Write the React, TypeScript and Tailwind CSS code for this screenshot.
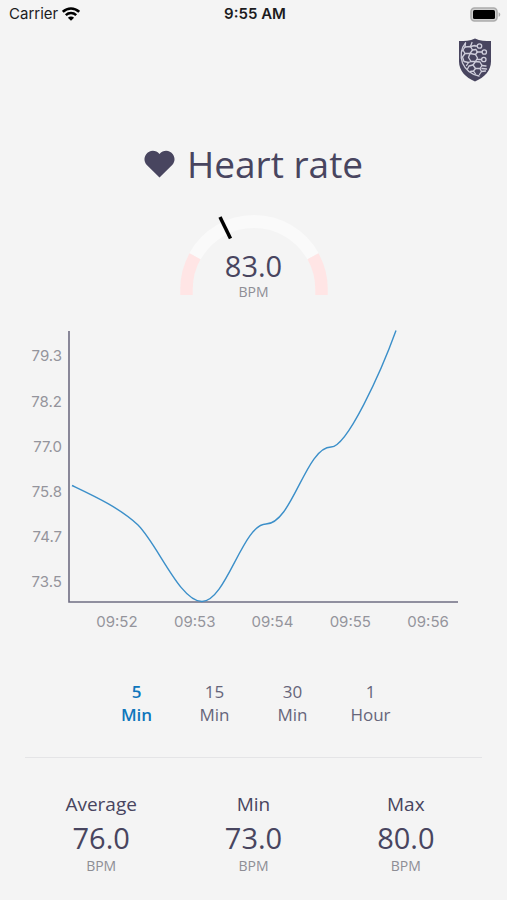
import { useState } from "react";

const levels = ["79.3", "78.2", "77.0", "75.8", "74.7", "73.5"];
const times = ["09:52", "09:53", "09:54", "09:55", "09:56"];
const ranges = [
  { amount: "5", unit: "Min" },
  { amount: "15", unit: "Min" },
  { amount: "30", unit: "Min" },
  { amount: "1", unit: "Hour" },
];
const stats = [
  { label: "Average", value: "76.0" },
  { label: "Min", value: "73.0" },
  { label: "Max", value: "80.0" },
];

function WifiIcon() {
  return (
    <svg className="h-[14px] w-[18px]" viewBox="0 0 18 14" fill="none" aria-hidden="true">
      <path d="M.8 4.900C5.600.3 12.400.3 17.200 4.900" stroke="#000" strokeWidth="2.600" />
      <path d="M3.800 8.200c3-2.800 7.400-2.800 10.400 0" stroke="#000" strokeWidth="2.500" />
      <path d="M9 13.800 5.900 10.800c1.800-1.600 4.400-1.600 6.200 0Z" fill="#000" />
    </svg>
  );
}

function BatteryIcon() {
  return (
    <svg className="h-[15px] w-[31px]" viewBox="0 0 31 15" aria-hidden="true">
      <rect x="1" y="1" width="26" height="13" rx="3.500" fill="#d0d0d0" stroke="#acacac" strokeWidth="1.600" />
      <rect x="3" y="3" width="22" height="9" rx="1.500" fill="#000" />
      <path d="M28.600 5.200c2.200.8 2.200 3.800 0 4.600Z" fill="#acacac" />
    </svg>
  );
}

function ShieldLogo() {
  return (
    <svg className="h-[44px] w-[34px]" viewBox="0 0 34 44" fill="none" aria-hidden="true">
      <path d="M17 .5c5 2.400 10.500 2.500 16 2.500v20.500c0 9-6.500 16-16 20C7.500 39.500 1 32.500 1 23.500V3C6.500 3 12 2.900 17 .5Z" fill="#48455f" />
      <g stroke="#cfcedb" strokeWidth="1.300" strokeLinejoin="round" strokeLinecap="round">
        <path d="M7.500 5C3 10 2 18 4.500 25c3 7 9 11.500 16.500 13" />
        <path d="M7.500 5 7 9M14 4.500l-1.500 4" />
        <path d="M7 9 12.500 8.500 14.500 12 12 15.500 7 15.500 5 12Z" />
        <path d="M12.500 8.500 17 7.500M14.500 12l3.500-.500 1.500 2.500-2 2.500" />
        <path d="M12 15.500 17.500 16.500 19.500 20 17.500 23.500 13 23.500 10.500 19.500Z" />
        <path d="M7 15.500 4.500 19 6 23.500 10.500 24.500 13 23.500M5 12 3.500 13.500" />
        <path d="m10.500 24.500-2 3M17.500 23.500l4.500.5 2 3.500-2 3h-4.500L15 27l2.500-3.500" />
        <path d="m15 27-4 1-1.500 3M17.500 30.500 15.500 33l2 3M15.500 33l-3 .5M22 30.500l1.500 3-2 3M24 27.500l4 .5M23.500 33.500l4-.5M24 30.500l4.500.5" />
        <path d="M17 8h2.500M18.500 14H24M19.500 21.500h4" />
        <circle cx="21.500" cy="8" r="2.200" />
        <circle cx="26.300" cy="14" r="2.200" />
        <circle cx="25.800" cy="21.500" r="2.200" />
      </g>
    </svg>
  );
}

function HeartIcon() {
  return (
    <svg className="h-[28px] w-[31px]" viewBox="0 0 32 29" aria-hidden="true">
      <path
        d="M16 28.500 2.600 15.200C-.2 12.300-.2 7.600 2.200 4.400 5.200.1 12-.7 16 4.200c4-4.900 10.800-4.100 13.800.2 2.400 3.200 2.400 7.900-.4 10.800Z"
        fill="#48455f"
      />
    </svg>
  );
}

function Gauge() {
  return (
    <div className="mx-auto mt-[26px] grid w-[150px]">
      <svg className="col-start-1 row-start-1 h-[80px] w-full" viewBox="0 0 150 80" fill="none" aria-hidden="true">
        <path d="M16 41.300A67.500 67.500 0 0 1 134 41.300" stroke="#fafafa" strokeWidth="13" />
        <path d="M7.500 80V74A67.500 67.500 0 0 1 16 41.300" stroke="#ffe5e5" strokeWidth="12.500" />
        <path d="M142.500 80V74A67.500 67.500 0 0 0 134 41.300" stroke="#ffe5e5" strokeWidth="12.500" />
        <path d="m41 2 10.500 21.500" stroke="#000" strokeWidth="3.500" />
      </svg>
      <div className="col-start-1 row-start-1 flex flex-col items-center pt-[33px]">
        <span className="text-[29px] leading-[36px]">83.0</span>
        <span className="text-[14px] leading-[16px] text-[#8e8e95]">BPM</span>
      </div>
    </div>
  );
}

function Chart() {
  return (
    <section aria-label="Heart rate over time" className="mt-[30px]">
      <div className="flex pr-[48px]">
        <div className="mt-[4px] flex h-[271px] w-[68px] flex-col pr-[6px] text-right font-[Inter,sans-serif] text-[15px] text-[#94949c]">
          {levels.map((level) => (
            <span key={level} className="flex flex-1 items-center justify-end">
              {level}
            </span>
          ))}
        </div>
        <svg className="h-[273px] min-w-0 flex-1 overflow-visible" viewBox="0 0 391 273" preserveAspectRatio="none" fill="none">
          <path d="M1 1V272H390" stroke="#6f6d82" strokeWidth="1.600" vectorEffect="non-scaling-stroke" />
          <path
            d="M4 155.500C26 166 52 178 70 195C90 215 112 271.500 134 271.500C158 271.500 175 194 198 194C224 194 238 117 263 117C279 117 313 42 328 .5"
            stroke="#3b8fc9"
            strokeWidth="1.400"
            vectorEffect="non-scaling-stroke"
          />
        </svg>
      </div>
      <div className="mr-[40px] ml-[78px] mt-[7px] grid grid-cols-5 text-center font-[Inter,sans-serif] text-[15px] leading-[20px] text-[#94949c]">
        {times.map((time) => (
          <span key={time}>{time}</span>
        ))}
      </div>
    </section>
  );
}

export default function App() {
  const [selected, setSelected] = useState(0);

  return (
    <div className="min-h-screen bg-[#f4f4f4] font-['Open_Sans',sans-serif] text-[#48455f]">
      <header>
        <div className="grid h-[28px] grid-cols-3 items-center pr-[6px] pl-[9px] font-[Inter,sans-serif] text-[15px] text-[#1c1c1e]">
          <span className="flex items-center gap-[4px]">
            Carrier
            <WifiIcon />
          </span>
          <span className="text-center font-semibold">9:55 AM</span>
          <span className="flex justify-end">
            <BatteryIcon />
          </span>
        </div>
        <div className="mt-[10px] flex justify-end pr-[15px]">
          <ShieldLogo />
        </div>
      </header>

      <main>
        <div className="mt-[57px] flex items-center justify-center gap-[12px]">
          <HeartIcon />
          <h1 className="text-[37px] leading-[50px]">Heart rate</h1>
        </div>

        <Gauge />
        <Chart />

        <div className="mx-auto mt-[48px] grid max-w-[312px] grid-cols-4">
          {ranges.map((range, index) => (
            <button
              key={range.amount}
              type="button"
              aria-pressed={index === selected}
              onClick={() => setSelected(index)}
              className={
                index === selected
                  ? "flex flex-col items-center text-[17px] leading-[23px] font-semibold text-[#0e76bc]"
                  : "flex flex-col items-center text-[17px] leading-[23px] text-[#66657a]"
              }
            >
              <span>{range.amount}</span>
              <span>{range.unit}</span>
            </button>
          ))}
        </div>

        <hr className="mx-[25px] mt-[31px] border-[#e4e4e6]" />

        <dl className="mx-[25px] mt-[31px] grid grid-cols-3 pb-[20px] text-center">
          {stats.map((stat) => (
            <div key={stat.label}>
              <dt className="text-[19px] leading-[30px]">{stat.label}</dt>
              <dd className="text-[29px] leading-[38px]">{stat.value}</dd>
              <dd className="text-[14px] leading-[18px] text-[#8e8e95]">BPM</dd>
            </div>
          ))}
        </dl>
      </main>
    </div>
  );
}
